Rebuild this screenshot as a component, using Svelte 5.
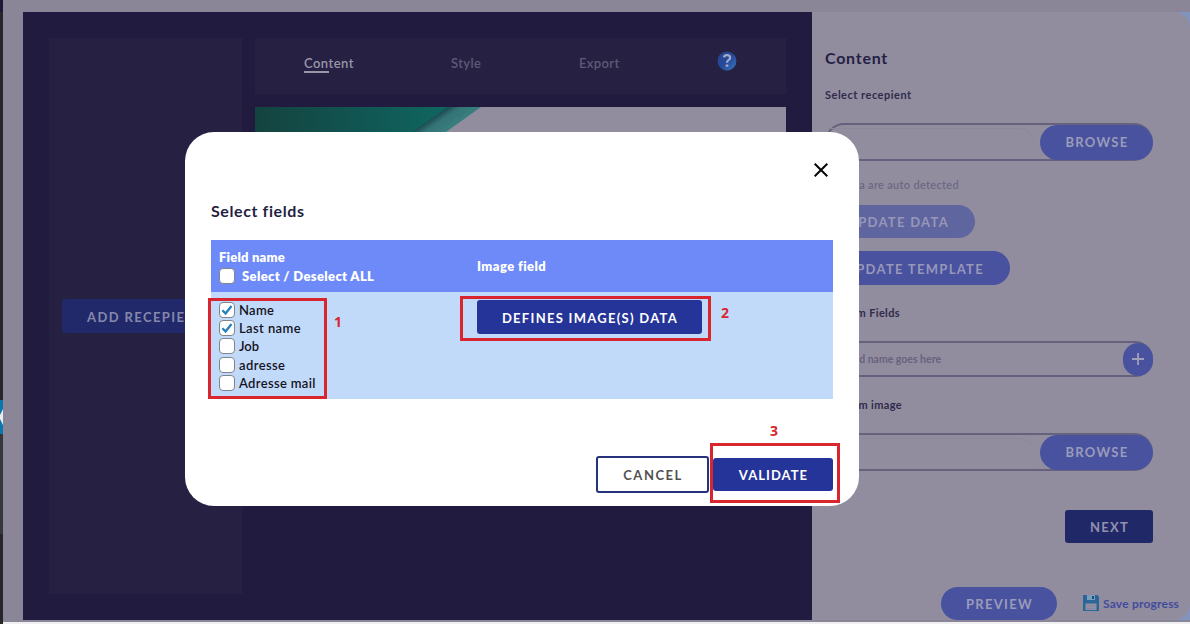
<script>
  let fields = $state([
    { label: 'Name', checked: true, gap: 0.3 },
    { label: 'Last name', checked: true, gap: 0.4 },
    { label: 'Job', checked: false, gap: 0 },
    { label: 'adresse', checked: false, gap: 0.4 },
    { label: 'Adresse mail', checked: false, gap: 0.33 },
  ]);
</script>

<div class="page">
  <div class="rail"><div class="rail-active"><svg width="3" height="16" viewBox="0 0 3 16"><path d="M3 0 0 6v4l3 6z" fill="#e8edf0" /></svg></div><div class="rail-sub"></div></div>
  <div class="shell">
    <div class="card">
      <section class="editor">
        <aside class="side"><button class="btn add">ADD RECEPIENT</button></aside>
        <div class="work">
          <nav class="tabs">
            <span class="tab on"><span>Content</span></span>
            <span class="tab style">Style</span>
            <span class="tab export">Export</span>
            <span class="help">
              <svg width="20" height="20" viewBox="0 0 20 20">
                <defs><linearGradient id="hg" x1="0" y1="0" x2="1" y2="1"><stop offset="0" stop-color="#2c428f" /><stop offset=".5" stop-color="#234a9b" /><stop offset="1" stop-color="#3b78bd" /></linearGradient></defs>
                <circle cx="10" cy="10" r="9.4" fill="url(#hg)" />
                <path d="M7 6.4Q7.3 4.2 10 4.2q3.1 0 3.1 2.5 0 1.3-1.4 2.2Q10 10 10 11.8" fill="none" stroke="#a5a9c6" stroke-width="2.3" />
                <rect x="8.7" y="13.5" width="2.6" height="2.3" fill="#a5a9c6" />
              </svg>
            </span>
          </nav>
          <div class="canvas">
            <svg width="531" height="100" viewBox="0 0 531 100">
              <defs>
                <linearGradient id="green" x1="0" x2="200" y1="0" y2="0" gradientUnits="userSpaceOnUse"><stop offset="0" stop-color="#14433f" /><stop offset=".5" stop-color="#115451" /><stop offset="1" stop-color="#0f6862" /></linearGradient>
                <linearGradient id="fold" x1="178" y1="10.5" x2="188" y2="25" gradientUnits="userSpaceOnUse"><stop offset="0" stop-color="#1b4b50" /><stop offset=".4" stop-color="#347477" /><stop offset="1" stop-color="#397d7e" /></linearGradient>
              </defs>
              <path d="M190 0h36L86 100H38z" fill="url(#fold)" />
              <path d="M0 0h193L50 100H0z" fill="url(#green)" />
            </svg>
          </div>
        </div>
      </section>
      <section class="panel">
        <h2>Content</h2>
        <p class="label recipient">Select recepient</p>
        <div class="picker"><span class="file"></span><button class="btn browse">BROWSE</button></div>
        <p class="hint">Data are auto detected</p>
        <button class="btn pill data">UPDATE DATA</button>
        <button class="btn pill template">UPDATE TEMPLATE</button>
        <p class="label custom">Custom Fields</p>
        <div class="picker namefield"><span class="placeholder">Field name goes here</span><span class="plus"><svg width="14" height="14" viewBox="0 0 14 14"><path d="M7 1v12M1 7h12" stroke="#a09fb8" stroke-width="1.8" /></svg></span></div>
        <p class="label image">Custom image</p>
        <div class="picker second"><span class="file"></span><button class="btn browse">BROWSE</button></div>
        <button class="btn next">NEXT</button>
        <footer>
          <button class="btn preview">PREVIEW</button>
          <svg class="disk" width="16" height="16" viewBox="0 0 16 16">
            <path d="M0 0h14.5L16 1.5V16H0z" fill="#2b6698" />
            <path d="M4 0h8v5H4z" fill="#789eb8" /><path d="M9 1h2v3H9z" fill="#204d7c" />
            <path d="M2.5 8.5h11V15h-11z" fill="#9290a5" /><path d="M4 11h8M4 13.5h8" stroke="#858399" />
          </svg>
          <span class="save">Save progress</span>
        </footer>
      </section>
    </div>
  </div>

  <div class="modal">
    <div class="close"><svg width="14" height="14" viewBox="0 0 14 14"><path d="M.7.7l12.6 12.6M13.3.7.7 13.3" stroke="#050505" stroke-width="2" /></svg></div>
    <h3>Select fields</h3>
    <div class="table">
      <div class="row head">
        <div class="cell"><div class="fname">Field name</div><label class="all"><span class="box"></span><span>Select / Deselect ALL</span></label></div>
        <div class="ifield">Image field</div>
      </div>
      <div class="row body">
        <div class="cell list">
          {#each fields as f}
            <label>
              <input type="checkbox" bind:checked={f.checked} />
              <span class="box">{#if f.checked}<svg width="14" height="14" viewBox="0 0 14 14"><path d="M2.4 7.2 5.6 10.5 11.5 3" fill="none" stroke="#2482bd" stroke-width="2.3" /></svg>{/if}</span>
              <span style="letter-spacing: {f.gap}px">{f.label}</span>
            </label>
          {/each}
        </div>
        <button class="btn define">DEFINES IMAGE(S) DATA</button>
      </div>
    </div>
    <div class="actions"><button class="btn cancel">CANCEL</button><button class="btn validate">VALIDATE</button></div>
  </div>

  <div class="mark m1"></div><b class="num n1">1</b>
  <div class="mark m2"></div><b class="num n2">2</b>
  <div class="mark m3"></div><b class="num n3">3</b>
</div>

<style>
  :global(body) { margin: 0; overflow: hidden; }
  * { box-sizing: border-box; }
  h2, h3, p { margin: 0; }
  .page { position: relative; display: flex; width: 1190px; height: 624px; overflow: hidden; background: #f0f0f2; font: 13px/18px Lato, sans-serif; color: #241f43; }
  .rail { width: 3px; background: linear-gradient(#1d1a38 0 12px, #25272b 12px); padding-top: 400px; }
  .rail-active { height: 34px; padding-top: 9px; background: #0877ad; line-height: 0; }
  .rail-sub { height: 100px; background: #34383d; }
  .shell { width: 1187px; height: 622px; padding: 12px 0 0 20px; background: #8a8698; }
  .card { display: flex; height: 608px; background: linear-gradient(90deg, #211c3f 790px, #8194bd 790px); }
  .editor { display: flex; gap: 13px; width: 789px; padding: 26px; background: #211c3f; }
  .side { width: 193px; padding: 261px 0 0 13px; background: #262143; overflow: hidden; }
  .work { width: 531px; }
  .tabs { display: flex; height: 56px; margin-bottom: 13px; padding: 16px 0 0 49px; background: #262143; color: #5e5a75; font-weight: 600; }
  .tab { letter-spacing: .35px; width: 147px; }
  .tab.on { color: #9996a8; letter-spacing: .45px; height: 19px; background: linear-gradient(#9996a8, #9996a8) 0 100% / 25px 2px no-repeat; }
  .tab.style { width: 128px; }
  .tab.export { width: 138px; }
  .help { margin-top: -3px; }
  .canvas { height: 200px; background: #918d9f; }
  .btn { display: flex; align-items: center; justify-content: center; flex: none; padding: 1px 0 0 1px; border: 0; border-radius: 3px; background: #253498; color: #fff; font: 700 13px/16px Lato, sans-serif; letter-spacing: 1.5px; white-space: nowrap; }
  .add { justify-content: flex-start; width: 167px; height: 34px; padding-left: 25px; letter-spacing: 1.4px; background: #21296b; color: #8688ab; }
  .panel { display: flex; flex-direction: column; width: 378px; padding: 35px 0 0 13px; background: #918d9f; border-radius: 0 16px 16px 0; }
  h2 { font-size: 16px; line-height: 22px; letter-spacing: .75px; color: #241f45; }
  .label { font-size: 11px; line-height: 16px; font-weight: 700; letter-spacing: .5px; color: #302a4b; }
  .recipient { margin-top: 18px; }
  .picker { display: flex; justify-content: space-between; align-items: center; width: 328px; height: 38px; margin-top: 20px; border: solid #66617c; border-width: 2px 0 2px 2px; border-radius: 19px; }
  .file { width: 208px; height: 29px; border-top: 1px solid #8c889c; border-right: 1px solid #8f8b9e; border-radius: 0 16px 0 0; }
  .browse { width: 113px; height: 35px; padding-top: 0; letter-spacing: 1.3px; border-radius: 18px; background: #48529f; color: #9b9bba; }
  .hint { width: 134px; margin-top: 15px; font-size: 11px; line-height: 18px; letter-spacing: .3px; direction: ltr; display: flex; justify-content: flex-end; white-space: nowrap; color: #6d6883; font-weight: 600; }
  .pill { justify-content: flex-end; padding-right: 26px; letter-spacing: 1.3px; border-radius: 17px; color: #9897ba; }
  .data { width: 150px; height: 33px; margin-top: 11px; background: #5e659f; }
  .template { width: 185px; height: 34px; margin-top: 13px; background: #48529f; }
  .custom { display: flex; justify-content: flex-end; width: 75px; white-space: nowrap; margin-top: 20px; letter-spacing: .35px; }
  .namefield { height: 36px; }
  .placeholder { display: flex; justify-content: flex-end; width: 114px; font-size: 10.5px; font-weight: 700; letter-spacing: 0; color: #67627d; white-space: nowrap; }
  .plus { display: flex; align-items: center; justify-content: center; width: 30px; height: 33px; border-radius: 15px; background: #48529f; }
  .image { display: flex; justify-content: flex-end; width: 77px; white-space: nowrap; margin-top: 20px; letter-spacing: .35px; }
  .next { width: 88px; height: 33px; margin: 39px 0 0 240px; letter-spacing: 1.3px; background: #212867; color: #9291b0; }
  footer { display: flex; align-items: center; height: 33px; margin: 44px 0 0 116px; }
  .preview { width: 116px; height: 33px; padding-top: 0; letter-spacing: 1.3px; border-radius: 17px; background: #48529f; color: #9b9bba; }
  .disk { margin: -2px 0 0 26px; }
  .save { margin: 0 0 0 4px; color: #414b9d; font-size: 12px; font-weight: 700; white-space: nowrap; letter-spacing: .2px; }

  .modal { position: absolute; left: 185px; top: 132px; width: 674px; height: 374px; padding: 31px 26px 0; background: #fff; border-radius: 29px; }
  .close { display: flex; justify-content: flex-end; height: 14px; padding-right: 5px; }
  h3 { margin-top: 23px; font-size: 16px; line-height: 22px; letter-spacing: .6px; }
  .table { margin-top: 18px; width: 622px; }
  .row { display: flex; }
  .head { height: 52px; padding: 8px; background: #6d8af8; color: #fff; font-weight: 800; }
  .cell { width: 258px; }
  .all { display: flex; align-items: center; gap: 7px; height: 19px; letter-spacing: .35px; }
  .ifield { padding-top: 9px; letter-spacing: .4px; }
  .fname { letter-spacing: .2px; }
  .body { height: 107px; padding: 8px; background: #c2dafa; color: #15131d; }
  .list { padding-top: 1px; }
  .list label { display: flex; align-items: center; gap: 4px; height: 18.2px; font-weight: 600; }
  input { display: none; }
  .box { display: block; flex: none; width: 16px; height: 16px; border: 1px solid #7f858b; border-radius: 4px; background: #fff; line-height: 0; }
  .define { width: 225px; height: 34px; letter-spacing: 1.28px; }
  .actions { display: flex; justify-content: flex-end; align-items: center; gap: 4px; height: 37px; margin-top: 57px; }
  .cancel { width: 113px; height: 37px; padding-top: 0; border: 2px solid #26327b; background: #fff; color: #515052; }
  .validate { width: 120px; height: 33px; padding-top: 0; letter-spacing: 1.05px; }
  .mark { position: absolute; border: 3px solid #d9252e; }
  .m1 { left: 208px; top: 298px; width: 119px; height: 101px; }
  .m2 { left: 460px; top: 296px; width: 251px; height: 45px; }
  .m3 { left: 710px; top: 443px; width: 130px; height: 60px; }
  .num { position: absolute; color: #d9252e; font: 700 14px/16px "Open Sans", sans-serif; }
  .n1 { left: 334px; top: 314px; }
  .n2 { left: 721px; top: 305px; }
  .n3 { left: 770px; top: 423px; }
</style>
